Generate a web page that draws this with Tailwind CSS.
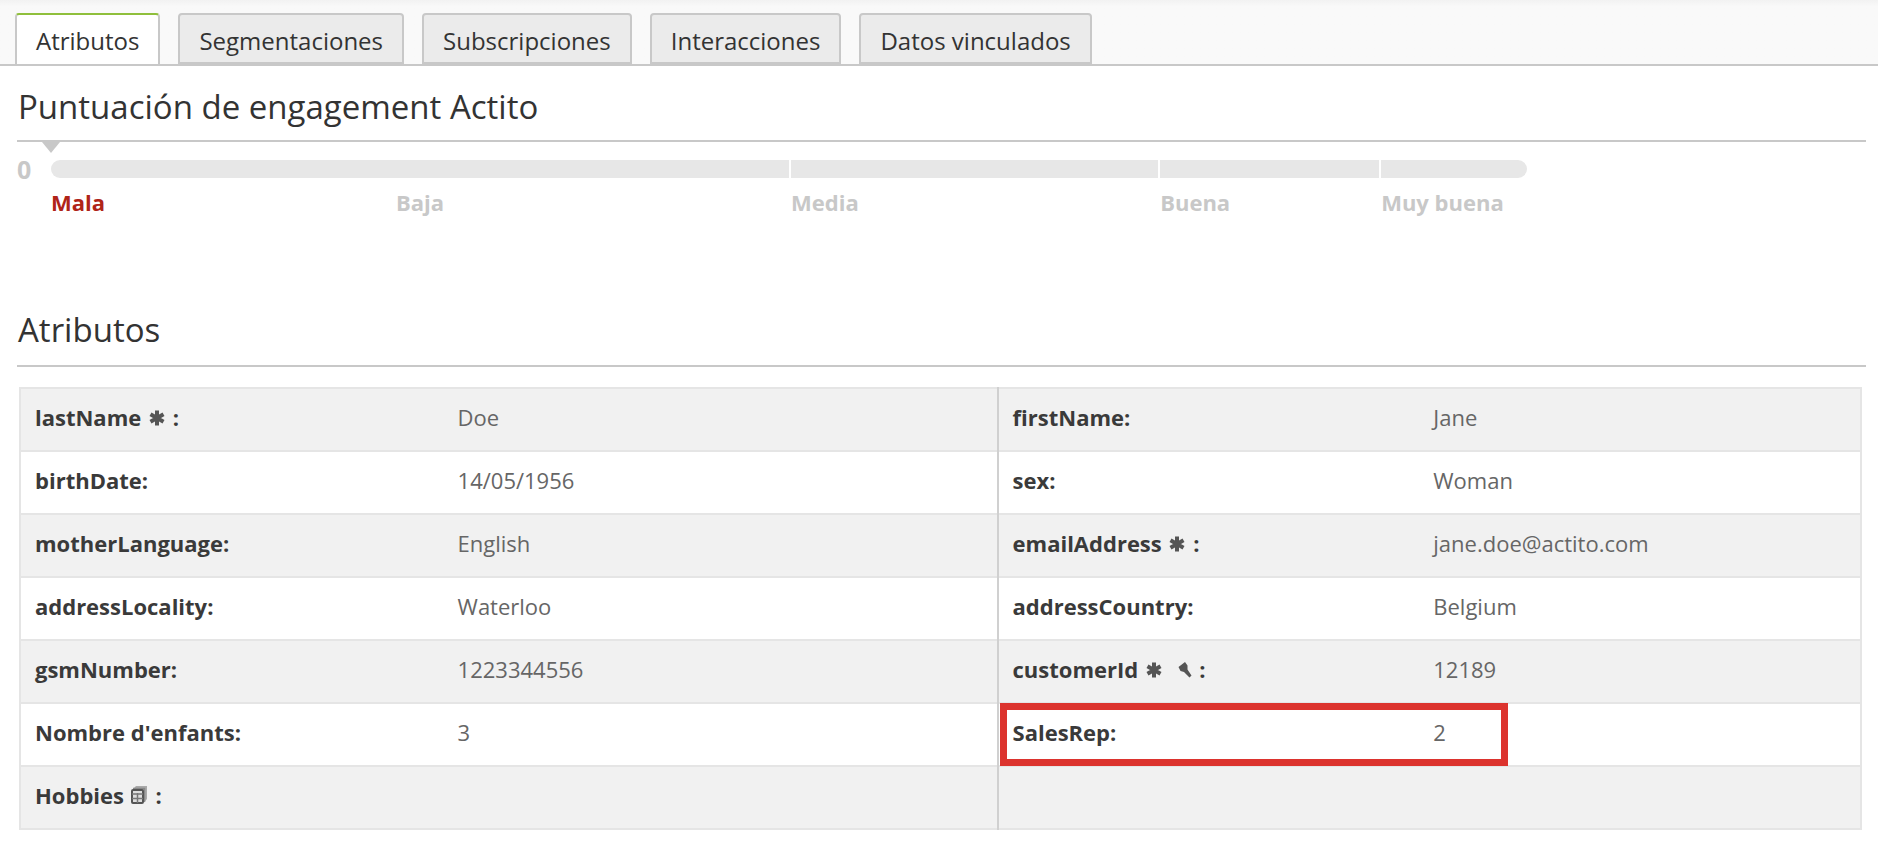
<!DOCTYPE html>
<html lang="es">
<head>
<meta charset="utf-8">
<meta name="viewport" content="width=device-width, initial-scale=1">
<title>Perfil</title>
<script src="https://cdn.jsdelivr.net/npm/@tailwindcss/browser@4"></script>
</head>
<body class="bg-white font-['Open_Sans',sans-serif] text-[#333333]">
<svg class="hidden" aria-hidden="true">
  <symbol id="required" viewBox="0 0 16 16">
    <path d="M8 0.500v15M1.500 4.300l13 7.400M14.500 4.300l-13 7.400" stroke="#555" stroke-width="4" fill="none"/>
  </symbol>
  <symbol id="key" viewBox="0 0 16 16">
    <path d="M0.500 5 7 0 9.500 3.500v4l4 6-2 2L6 10 2.500 9z" fill="#555"/>
  </symbol>
  <symbol id="multi" viewBox="0 0 18 20">
    <path d="M3.500 3.500 6 1h11v13l-3 3.500z" fill="#aaa"/>
    <path d="M3 3.500h11.500V17" stroke="#888" stroke-width="1.500" fill="none"/>
    <rect x="2" y="5" width="11" height="13" rx="1" fill="#ddd" stroke="#555" stroke-width="2"/>
    <path d="M2 9h11M2 13.500h11M7.500 8v10" stroke="#777" stroke-width="1.500"/>
  </symbol>
</svg>

<nav role="tablist" class="flex items-end gap-[18px] border-b-2 border-[#c8c8c8] bg-linear-to-b from-[#f2f2f2] to-[#f9f9f9] to-10% px-[15px] pt-[13px] text-2xl leading-8">
  <button role="tab" aria-selected="true" class="h-[51px] rounded-t-sm border-x-2 border-t-2 border-x-[#c8c8c8] border-t-[#8fbf3c] bg-white px-[19px] pt-[2px]">Atributos</button>
  <button role="tab" class="h-[51px] rounded-t-sm border-2 border-[#c8c8c8] bg-[#ebebeb] px-[19px] pt-1">Segmentaciones</button>
  <button role="tab" class="h-[51px] rounded-t-sm border-2 border-[#c8c8c8] bg-[#ebebeb] px-[19px] pt-1">Subscripciones</button>
  <button role="tab" class="h-[51px] rounded-t-sm border-2 border-[#c8c8c8] bg-[#ebebeb] px-[19px] pt-1">Interacciones</button>
  <button role="tab" class="h-[51px] rounded-t-sm border-2 border-[#c8c8c8] bg-[#ebebeb] px-[19px] pt-1">Datos vinculados</button>
</nav>

<main class="pr-3 pl-[17px]">
  <section class="pt-[19px]">
    <h2 class="border-b-2 border-[#c8c8c8] pb-[11px] pl-px text-[33px] leading-[44px]">Puntuación de engagement Actito</h2>
    <div class="flex">
      <div class="w-[34px] shrink-0 pt-[9px] text-[25px] leading-9 font-bold text-[#c8c8c8]">0</div>
      <div class="w-[calc(80%-3px)]">
        <div class="-ml-[9px] h-[11px] w-[18px] bg-[#c8c8c8] [clip-path:polygon(0_0,100%_0,50%_100%)]"></div>
        <div class="mt-[7px] grid h-[18px] grid-cols-[738fr_367fr_219fr_146fr] gap-[2px] overflow-hidden rounded-full">
          <div class="bg-[#e7e7e7]"></div><div class="bg-[#e7e7e7]"></div><div class="bg-[#e7e7e7]"></div><div class="bg-[#e7e7e7]"></div>
        </div>
        <div class="mt-2 grid grid-cols-[738fr_367fr_219fr_146fr] gap-[2px] text-[22px] leading-8 font-bold whitespace-nowrap text-[#c8c8c8]">
          <div class="flex"><span class="w-[345px] text-[#b02418]">Mala</span><span>Baja</span></div>
          <span>Media</span><span>Buena</span><span>Muy buena</span>
        </div>
      </div>
    </div>
  </section>

  <section class="pt-[90px]">
    <h2 class="border-b-2 border-[#c8c8c8] pb-[13px] pl-px text-[33px] leading-[44px]">Atributos</h2>
    <table class="mt-5 ml-[2px] w-[calc(100%-6px)] table-fixed border-collapse border-2 border-[#e5e5e5] text-left text-[22px] leading-[30px] text-[#666666] [&_td]:pr-4 [&_td]:pb-[5px] [&_td]:pl-4 [&_th]:pr-4 [&_th]:pb-[5px] [&_th]:pl-[14px] [&_th]:text-[#3a3a3a] [&_tr]:h-[63px] [&_tr]:border-b-2 [&_tr]:border-[#e5e5e5] [&_tr:nth-child(odd)]:bg-[#f1f1f1]">
      <colgroup><col class="w-[22.9%]"><col class="w-[30.2%]"><col class="w-[22.8%]"><col></colgroup>
      <tbody>
        <tr><th scope="row">lastName <svg class="mx-[2px] inline size-4 align-[0px]"><use href="#required"/></svg> :</th><td>Doe</td><th scope="row" class="border-l-2 border-[#d0d0d0]">firstName:</th><td>Jane</td></tr>
        <tr><th scope="row">birthDate:</th><td>14/05/1956</td><th scope="row" class="border-l-2 border-[#d0d0d0]">sex:</th><td>Woman</td></tr>
        <tr><th scope="row">motherLanguage:</th><td>English</td><th scope="row" class="border-l-2 border-[#d0d0d0]">emailAddress <svg class="mx-[2px] inline size-4 align-[0px]"><use href="#required"/></svg> :</th><td>jane.doe@actito.com</td></tr>
        <tr><th scope="row">addressLocality:</th><td>Waterloo</td><th scope="row" class="border-l-2 border-[#d0d0d0]">addressCountry:</th><td>Belgium</td></tr>
        <tr><th scope="row">gsmNumber:</th><td>1223344556</td><th scope="row" class="border-l-2 border-[#d0d0d0]">customerId <svg class="mx-[2px] inline size-4 align-[0px]"><use href="#required"/></svg> <svg class="ml-2 inline size-4 align-[0px]"><use href="#key"/></svg> :</th><td>12189</td></tr>
        <tr><th scope="row">Nombre d'enfants:</th><td>3</td><th scope="row" class="relative border-l-2 border-[#d0d0d0]">SalesRep:<div class="pointer-events-none absolute -top-px -bottom-px left-px w-[calc(121%+2px)] border-[7px] border-[#dc332e]"></div></th><td>2</td></tr>
        <tr><th scope="row">Hobbies <svg class="mr-[2px] inline h-5 w-[18px] align-[-1px]"><use href="#multi"/></svg> :</th><td></td><td class="border-l-2 border-[#d0d0d0]"></td><td></td></tr>
      </tbody>
    </table>
  </section>
</main>
</body>
</html>
